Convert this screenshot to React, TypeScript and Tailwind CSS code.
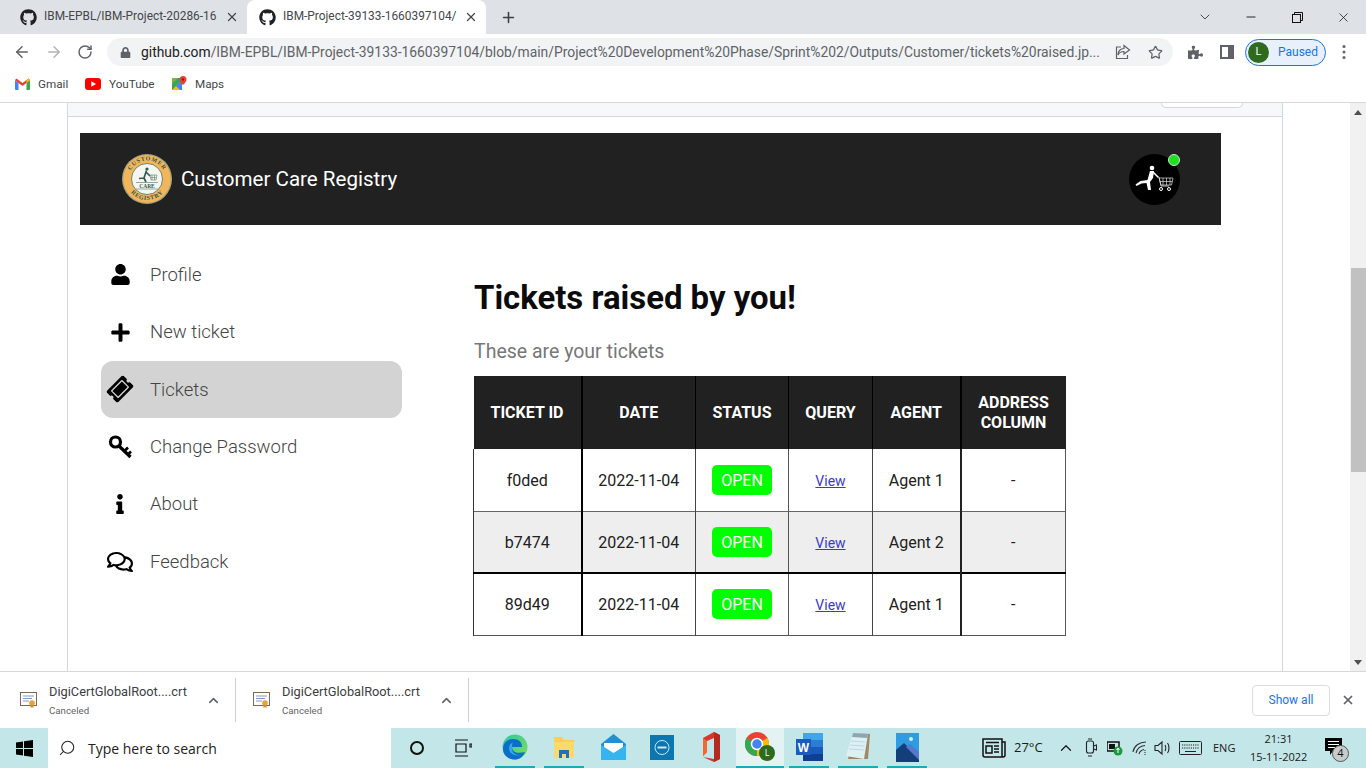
import React from "react";
import { ArrowLeft, ArrowRight, RotateCw, Star, X, Plus, ChevronDown, ChevronUp, Minus, Search } from "lucide-react";
import { FaGithub, FaUser, FaPlus, FaTicketAlt, FaInfo, FaRegComments, FaPuzzlePiece, FaLock } from "react-icons/fa";

function Tab({ title, active }: { title: string; active?: boolean }) {
  return (
    <div className={`relative flex h-[34px] w-[239px] items-center rounded-t-lg pl-[12px] ${active ? "bg-white" : ""}`}>
      <FaGithub className="h-[17px] w-[17px] shrink-0 text-[#202124]" />
      <div className="ml-[7px] w-[174px] whitespace-nowrap text-[11.900px] text-[#45474a]">{title}</div>
      <X className="ml-[7px] h-[14px] w-[14px] shrink-0 text-[#45474a]" strokeWidth={2.2} />
    </div>
  );
}

function Gmail() {
  return (
    <svg width="15" height="12" viewBox="0 0 15 12">
      <path d="M0 2v9a1 1 0 0 0 1 1h2.500V5z" fill="#4285f4" />
      <path d="M15 2v9a1 1 0 0 1-1 1h-2.500V5z" fill="#34a853" />
      <path d="M0 2 1.500.4 7.500 5 13.500.4 15 2l-3.500 3-4 3-4-3z" fill="#ea4335" />
      <path d="M11.500 1.900 13.500.4 15 2l-3.500 3z" fill="#fbbc04" />
    </svg>
  );
}
function YouTube() {
  return (
    <svg width="16" height="12" viewBox="0 0 16 12">
      <rect width="16" height="12" rx="3" fill="#f00" />
      <path d="M6.300 3.300v5.400L11 6z" fill="#fff" />
    </svg>
  );
}
function Maps() {
  return (
    <svg width="15" height="16" viewBox="0 0 15 16">
      <path d="M0 2h10v12H0z" fill="#34a853" />
      <path d="M0 14 10 4v10z" fill="#fbbc04" />
      <path d="M4 10 10 4v10H8z" fill="#4285f4" />
      <path d="M0 2h6L0 8z" fill="#7cb342" />
      <path d="M11 0a3.500 3.500 0 0 1 3.500 3.500C14.500 6 11 9 11 9S7.500 6 7.500 3.500A3.500 3.500 0 0 1 11 0z" fill="#ea4335" />
      <circle cx="11" cy="3.500" r="1.200" fill="#a50e0e" />
    </svg>
  );
}
function Bookmark({ icon, label, w }: { icon: React.ReactNode; label: string; w: string }) {
  return (
    <div className={`flex items-center ${w}`}>
      <div className="flex w-[16px] justify-center">{icon}</div>
      <span className="ml-[8px] text-[11.700px] text-[#45474a]">{label}</span>
    </div>
  );
}

function Logo() {
  return (
    <svg width="50" height="50" viewBox="0 0 50 50" className="shrink-0">
      <defs>
        <path id="arcTop" d="M6.500 25a18.500 18.500 0 0 1 37 0" />
        <path id="arcBot" d="M4 25a21 21 0 0 0 42 0" />
      </defs>
      <circle cx="25" cy="25" r="25" fill="#a9a47c" />
      <circle cx="25" cy="25" r="23.700" fill="#f2b65a" />
      <circle cx="25" cy="25" r="15.500" fill="#f6f6f0" stroke="#2f5d55" strokeWidth="0.7" />
      <text fontSize="6" fontWeight="700" fill="#35524a" fontFamily="'Liberation Serif', serif" letterSpacing="0.7">
        <textPath href="#arcTop" startOffset="50%" textAnchor="middle">CUSTOMER</textPath>
      </text>
      <text fontSize="6" fontWeight="700" fill="#35524a" fontFamily="'Liberation Serif', serif" letterSpacing="0.7">
        <textPath href="#arcBot" startOffset="50%" textAnchor="middle">REGISTRY</textPath>
      </text>
      <circle cx="25" cy="15" r="1.600" fill="#2f5d55" />
      <path d="M24.500 16.500 22 24l-5 .5M22 24l2 4M24 18l4 4" stroke="#2f5d55" strokeWidth="1.700" fill="none" />
      <path d="M28 21h7l-1 5h-5z M30 21v5M32.500 21v5M28.500 23.500h6" stroke="#4f7f76" strokeWidth="0.6" fill="none" />
      <rect x="15" y="29" width="20" height="6" fill="#f6f6f0" />
      <path d="M14 28.500h22M14 35h22" stroke="#2f5d55" strokeWidth="0.5" />
      <text x="25" y="34" fontSize="5.500" fontWeight="700" fill="#2f5d55" textAnchor="middle" fontFamily="'Liberation Serif', serif">CARE</text>
    </svg>
  );
}

function CartRunner() {
  return (
    <svg width="51" height="51" viewBox="0 0 51 51">
      <circle cx="25.500" cy="25.500" r="25.500" fill="#000" />
      <circle cx="23" cy="14" r="2.300" fill="#fff" />
      <path d="M21 17h4l-1 7-3 4 1 8h-3l-1.500-7-5 .5-5 2.500-1-1.500 5-3.500 7-1z" fill="#fff" />
      <path d="M24 18l5 5" stroke="#fff" strokeWidth="1.500" fill="none" />
      <path d="M28 23h2l2 9h8" stroke="#fff" strokeWidth="0.8" fill="none" />
      <path d="M30 24h14l-1.500 7H32zM34 24v7M37.500 24v7M41 24v7M31 27.500h12.500" stroke="#ddd" strokeWidth="0.7" fill="none" />
      <circle cx="32" cy="35" r="1.500" fill="none" stroke="#fff" />
      <circle cx="40" cy="35" r="1.500" fill="none" stroke="#fff" />
    </svg>
  );
}

function KeyIcon() {
  return (
    <svg width="25" height="25" viewBox="0 0 25 25" fill="none" stroke="#000">
      <circle cx="7.500" cy="8" r="5" strokeWidth="3.200" />
      <path d="M11 12 22.500 23" strokeWidth="3.200" />
      <path d="M16.500 17 20 13.500M20 20.500l3-3" strokeWidth="2.600" />
    </svg>
  );
}

const menu: { label: string; icon: React.ReactNode; active?: boolean }[] = [
  { label: "Profile", icon: <FaUser className="h-[21px] w-[21px]" /> },
  { label: "New ticket", icon: <FaPlus className="h-[21px] w-[21px]" /> },
  { label: "Tickets", icon: <FaTicketAlt className="h-[24px] w-[24px] -rotate-45" />, active: true },
  { label: "Change Password", icon: <KeyIcon /> },
  { label: "About", icon: <FaInfo className="h-[20px] w-[20px]" /> },
  { label: "Feedback", icon: <FaRegComments className="h-[26px] w-[26px]" /> },
];

const rows = [
  { id: "f0ded", agent: "Agent 1", bg: "bg-white", line: "border-b border-b-[#666]" },
  { id: "b7474", agent: "Agent 2", bg: "bg-[#eeeeee]", line: "border-b-2 border-b-black" },
  { id: "89d49", agent: "Agent 1", bg: "bg-white", line: "border-b border-b-[#555]" },
];

function TicketTable() {
  return (
    <table className="ml-[-1px] mt-[12px] w-[592px] table-fixed border-collapse font-['Roboto',sans-serif] text-[16px] text-[#212121]">
      <colgroup>
        <col className="w-[108px]" />
        <col className="w-[114px]" />
        <col className="w-[93px]" />
        <col className="w-[84px]" />
        <col className="w-[88px]" />
        <col className="w-[105px]" />
      </colgroup>
      <thead>
        <tr className="h-[73px] bg-[#212121] text-center font-bold leading-[20px] text-white">
          <th className="border-r-2 border-r-black">TICKET ID</th>
          <th className="border-r border-r-black">DATE</th>
          <th className="border-r border-r-black">STATUS</th>
          <th className="border-r border-r-black">QUERY</th>
          <th className="border-r-2 border-r-black">AGENT</th>
          <th>ADDRESS<br />COLUMN</th>
        </tr>
      </thead>
      <tbody>
        {rows.map((r) => (
          <tr key={r.id} className={`h-[62px] text-center ${r.bg} ${r.line}`}>
            <td className="border-l border-r-2 border-l-[#333] border-r-black pt-[2px]">{r.id}</td>
            <td className="border-r border-r-[#444] pt-[2px]">2022-11-04</td>
            <td className="border-r border-r-[#555]">
              <span className="inline-block h-[30px] w-[60px] rounded-[5px] bg-[#00ff00] text-center leading-[31px] text-white">OPEN</span>
            </td>
            <td className="border-r border-r-[#444] pt-[2px]">
              <a className="text-[14px] text-[#3a3ad0] underline">View</a>
            </td>
            <td className="border-r-2 border-r-[#222] pt-[2px]">{r.agent}</td>
            <td className="border-r border-r-[#555] pt-[2px]">-</td>
          </tr>
        ))}
      </tbody>
    </table>
  );
}

function CertIcon() {
  return (
    <svg width="17" height="16" viewBox="0 0 17 16" className="shrink-0">
      <rect x="0.500" y="0.500" width="16" height="13" fill="#fff" stroke="#7b6a55" />
      <path d="M3 4h11M3 6.500h9M3 9h6" stroke="#7f9cc7" strokeWidth="1" />
      <circle cx="12" cy="11" r="2.800" fill="#e6a23c" />
      <path d="M10.500 13v3l1.500-1 1.500 1v-3" fill="#d08a2a" />
    </svg>
  );
}

function Download() {
  return (
    <div className="flex h-[44px] w-[233px] items-center border-r border-r-[#cfd1d3] pl-[17px]">
      <CertIcon />
      <div className="ml-[12px] w-[145px]">
        <div className="whitespace-nowrap text-[12.800px] leading-[16px] text-[#3c4043]">DigiCertGlobalRoot....crt</div>
        <div className="mt-[5px] text-[9.700px] leading-[12px] text-[#5f6368]">Canceled</div>
      </div>
      <ChevronUp className="ml-[12px] h-[15px] w-[15px] text-[#5f6368]" strokeWidth={2.4} />
    </div>
  );
}

function TaskSlot({ w = "w-[40px]", line, active, children }: { w?: string; line?: boolean; active?: boolean; children: React.ReactNode }) {
  return (
    <div className={`flex h-[40px] shrink-0 flex-col items-center ${w} ${active ? "bg-[#e3f3f4]" : ""}`}>
      <div className="flex flex-1 items-center justify-center">{children}</div>
      <div className={`h-[2px] w-full ${line ? "bg-[#10b0ba]" : ""}`} />
    </div>
  );
}

function Edge() {
  return (
    <svg width="26" height="26" viewBox="0 0 26 26">
      <defs>
        <linearGradient id="edgeA" x1="0" y1="0" x2="1" y2="1">
          <stop offset="0" stopColor="#2fc6a0" />
          <stop offset="1" stopColor="#7ee05a" />
        </linearGradient>
      </defs>
      <circle cx="13" cy="13" r="12.500" fill="url(#edgeA)" />
      <path d="M1 15C1 8 6 5 11 5c6 0 9 3 9 8H10c0 5 5 7 13 5-2 5-6 7.500-10 7.500C6 25.500 1 21 1 15z" fill="#0c6fc7" />
      <path d="M10 13c-1 6 5 10 11 7-6 3-14 1-14-6 0-3 2-5 4-5.500-1 1-1 3-1 4.500z" fill="#36a7e8" />
    </svg>
  );
}
function Explorer() {
  return (
    <svg width="22" height="24" viewBox="0 0 22 24">
      <path d="M1 2h8l2 3h10v18H1z" fill="#f7cf5a" />
      <path d="M1 7h20v16H1z" fill="#fcd96b" />
      <path d="M6 23v-8h10v8h-3v-4H9v4z" fill="#1f6fc2" />
    </svg>
  );
}
function Mail() {
  return (
    <svg width="25" height="26" viewBox="0 0 25 26">
      <path d="M0 10 12.500 0 25 10v16H0z" fill="#1f8fd8" />
      <path d="M3 9h19v7l-9.500 6L3 16z" fill="#fff" />
      <path d="M0 11 12.500 19 25 11v15H0z" fill="#35b4f0" />
    </svg>
  );
}
function Dell() {
  return (
    <svg width="24" height="25" viewBox="0 0 24 25">
      <rect width="24" height="25" fill="#0b76b0" />
      <circle cx="12" cy="12.500" r="7" fill="none" stroke="#cfe8f4" strokeWidth="1" />
      <path d="M7.500 12.500h9" stroke="#cfe8f4" strokeWidth="2" />
    </svg>
  );
}
function Office() {
  return (
    <svg width="20" height="32" viewBox="0 0 20 32" className="ml-[4px]">
      <path d="M2 7 13 1l6 3v24l-6 3-11-5 11 2V7l-7 3v11l-4 4z" fill="#d8362a" />
      <path d="M13 1l6 3v24l-6 3z" fill="#b5291f" />
      <path d="M2 7 6 10v11l-4 4z" fill="#ef6a33" />
    </svg>
  );
}
function Chrome() {
  return (
    <div className="relative h-[32px] w-[30px]">
      <svg width="24" height="24" viewBox="0 0 24 24" className="mt-[1px]">
        <circle cx="12" cy="12" r="12" fill="#ea4335" />
        <path d="M12 12 1.600 6A12 12 0 0 0 12 24z" fill="#34a853" />
        <path d="M12 12V24A12 12 0 0 0 22.400 6z" fill="#fbbc04" />
        <circle cx="12" cy="12" r="5.500" fill="#4285f4" stroke="#fff" strokeWidth="1.500" />
      </svg>
      <div className="absolute right-0 bottom-[2px] flex h-[16px] w-[16px] items-center justify-center rounded-full bg-[#2e6b1f] text-[9px] text-white">L</div>
    </div>
  );
}
function Word() {
  return (
    <svg width="27" height="28" viewBox="0 0 27 28">
      <rect x="7" y="0" width="20" height="7" fill="#41a5ee" />
      <rect x="7" y="7" width="20" height="7" fill="#2b7cd3" />
      <rect x="7" y="14" width="20" height="7" fill="#185abd" />
      <rect x="7" y="21" width="20" height="7" fill="#103f91" />
      <rect x="0" y="6" width="15" height="16" fill="#1a5bc0" />
      <text x="7.500" y="18.500" fontSize="12" fontWeight="700" fill="#fff" textAnchor="middle" fontFamily="'Liberation Sans', sans-serif">W</text>
    </svg>
  );
}
function Notepad() {
  return (
    <svg width="26" height="30" viewBox="0 0 26 30">
      <path d="M9 1 25 2 23 27 3 27z" fill="#a08a63" />
      <path d="M8 1 23 2 19 27 1 24z" fill="#dff0f4" />
      <path d="M8 1 23 2 22.400 6 7 5z" fill="#8aa7b3" />
      <path d="M6 9 20 10M5 13 19.500 14M4 17 19 18" stroke="#b9d9e4" strokeWidth="1" />
    </svg>
  );
}
function Photos() {
  return (
    <svg width="23" height="29" viewBox="0 0 23 29">
      <rect width="23" height="29" fill="#2f9be0" />
      <path d="M0 29V17l8-7 15 15v4z" fill="#123f7a" />
      <path d="M10 14l4-3 9 8v8z" fill="#5577cf" />
      <circle cx="15" cy="6" r="2" fill="#cfeefb" />
    </svg>
  );
}

function Tray() {
  return (
    <div className="flex h-[40px] w-[384px] shrink-0 items-center text-[#1a1a1a]">
      <svg width="24" height="20" viewBox="0 0 24 20" className="shrink-0" fill="none" stroke="#111" strokeWidth="1.500">
        <path d="M1 1h19v18H3a2 2 0 0 1-2-2zM20 4h3v13a2 2 0 0 1-2 2h-1" />
        <rect x="4" y="8" width="6" height="7" />
        <path d="M12 8h5M12 11h5M12 14h5M4 4.500h13" />
      </svg>
      <span className="ml-[8px] w-[29px] whitespace-nowrap text-[13px]">27°C</span>
      <ChevronUp className="ml-[14px] h-[18px] w-[18px] shrink-0" strokeWidth={1.6} />
      <svg width="12" height="20" viewBox="0 0 12 20" className="ml-[10px] shrink-0" fill="none" stroke="#222" strokeWidth="1.100">
        <rect x="1.500" y="3" width="7" height="12" rx="2" />
        <path d="M3 1h4M3 18h4M8.500 8l3-1v5l-3-1" />
      </svg>
      <svg width="16" height="16" viewBox="0 0 16 16" className="ml-[10px] shrink-0">
        <rect x="0" y="2" width="12" height="9" fill="none" stroke="#111" strokeWidth="1.500" />
        <rect x="2" y="4" width="6" height="5" fill="#111" />
        <circle cx="11" cy="11" r="4.500" fill="#1a9a3a" />
        <path d="M11 8v5M9.500 10l1.500-2 1.500 2" stroke="#fff" strokeWidth="1" fill="none" />
      </svg>
      <svg width="16" height="16" viewBox="0 0 16 16" className="ml-[9px] shrink-0" fill="none" stroke="#333" strokeWidth="1.100">
        <path d="M1 12C2 6 7 2 14 2M4 13c1-4 4-7 9-7.500M7 14c.5-2 2.500-4 5-4.500" />
        <path d="M13 10v5" strokeDasharray="1 1" />
      </svg>
      <svg width="18" height="18" viewBox="0 0 18 18" className="ml-[6px] shrink-0" fill="none" stroke="#222" strokeWidth="1.100">
        <path d="M1 6.500h3L8 3v12l-4-3.500H1zM11 6c1 1.500 1 4.500 0 6M13.500 4c2 2.500 2 7.500 0 10" />
      </svg>
      <svg width="23" height="14" viewBox="0 0 23 14" className="ml-[7px] shrink-0" fill="none" stroke="#222" strokeWidth="1">
        <rect x="0.500" y="0.500" width="22" height="13" rx="1" />
        <path d="M3 4h17M3 7h17" strokeDasharray="1.200 1" />
        <path d="M6 10.500h11" />
      </svg>
      <span className="ml-[11px] w-[22px] whitespace-nowrap text-[11px]">ENG</span>
      <div className="ml-[15px] w-[57px] whitespace-nowrap text-center text-[11px] leading-[18px]">
        <div>21:31</div>
        <div>15-11-2022</div>
      </div>
      <div className="relative ml-[18px] h-[26px] w-[24px]">
        <svg width="17" height="17" viewBox="0 0 17 17" className="absolute top-[3px] left-0">
          <path d="M0 0h17v13H8l-3 4v-4H0z" fill="#000" />
          <path d="M3 3.500h11M3 6.500h11M3 9.500h8" stroke="#fff" strokeWidth="1" />
        </svg>
        <div className="absolute right-0 bottom-[-1px] flex h-[17px] w-[17px] items-center justify-center rounded-full border border-[#555] bg-[#c8cccc] text-[11px] text-[#111]">4</div>
      </div>
    </div>
  );
}

export default function App() {
  return (
    <div className="flex h-[768px] w-[1366px] flex-col overflow-hidden bg-white font-['Roboto',sans-serif]">
      {/* tab strip */}
      <div className="flex h-[34px] shrink-0 items-center bg-[#dee1e6] pl-[8px]">
        <Tab title="IBM-EPBL/IBM-Project-20286-16" />
        <Tab title="IBM-Project-39133-1660397104/" active />
        <Plus className="ml-[14px] h-[17px] w-[17px] text-[#3c4043]" strokeWidth={2.2} />
        <div className="flex-1" />
        <ChevronDown className="h-[16px] w-[16px] text-[#333]" strokeWidth={1.3} />
        <Minus className="ml-[31px] h-[14px] w-[14px] text-[#111]" strokeWidth={1.5} />
        <svg width="11" height="11" viewBox="0 0 11 11" className="ml-[34px]" fill="none" stroke="#111" strokeWidth="1">
          <rect x="0.500" y="2.500" width="8" height="8" />
          <path d="M2.500 2.500v-2h8v8h-2" />
        </svg>
        <X className="ml-[33px] mr-[15px] h-[15px] w-[15px] text-[#111]" strokeWidth={1.2} />
      </div>
      {/* toolbar */}
      <div className="flex h-[34px] shrink-0 items-center bg-white pl-[13px] pt-[2px]">
        <ArrowLeft className="h-[18px] w-[18px] text-[#5f6368]" strokeWidth={2} />
        <ArrowRight className="ml-[14px] h-[18px] w-[18px] text-[#b3b5b8]" strokeWidth={2} />
        <RotateCw className="ml-[14px] h-[16px] w-[16px] text-[#5f6368]" strokeWidth={2.2} />
        <div className="ml-[14px] flex h-[28px] w-[1066px] shrink-0 items-center rounded-full bg-[#f1f3f4] pl-[13px]">
          <FaLock className="h-[11px] w-[11px] shrink-0 text-[#5f6368]" />
          <div className="ml-[10px] w-[958px] shrink-0 whitespace-nowrap text-[13.850px] text-[#5f6368]">
            <span className="text-[#202124]">github.com</span>/IBM-EPBL/IBM-Project-39133-1660397104/blob/main/Project%20Development%20Phase/Sprint%202/Outputs/Customer/tickets%20raised.jp...
          </div>
          <svg width="16" height="16" viewBox="0 0 16 16" className="ml-[16px] shrink-0" fill="none" stroke="#5f6368" strokeWidth="1.200">
            <path d="M9 1.500 14.500 6 9 10V7.500C5.500 7.500 4 9 3 11c0-4 2.500-6.500 6-6.500zM6 3H1.500v11.500h11V11" />
          </svg>
          <Star className="ml-[17px] h-[15px] w-[15px] shrink-0 text-[#5f6368]" strokeWidth={2} />
        </div>
        <FaPuzzlePiece className="ml-[15px] h-[15px] w-[15px] text-[#5f6368]" />
        <svg width="14" height="14" viewBox="0 0 14 14" className="ml-[17px]">
          <path d="M0 0h14v14H0z" fill="#5f6368" />
          <path d="M2 2h6v10H2z" fill="#fff" />
        </svg>
        <div className="ml-[11px] flex h-[27px] w-[81px] items-center rounded-full border border-[#1a73e8] bg-[#e8f0fb] pl-[2px]">
          <div className="flex h-[21px] w-[21px] items-center justify-center rounded-full bg-[#2e6b1f] text-[11px] text-white">L</div>
          <span className="ml-[9px] text-[12px] text-[#1a73e8]">Paused</span>
        </div>
        <svg width="4" height="16" viewBox="0 0 4 16" className="ml-[16px]" fill="#5f6368">
          <circle cx="2" cy="2.500" r="1.500" />
          <circle cx="2" cy="8" r="1.500" />
          <circle cx="2" cy="13.500" r="1.500" />
        </svg>
      </div>
      {/* bookmarks */}
      <div className="flex h-[35px] shrink-0 items-center border-b border-b-[#d6d8da] bg-white pb-[1px] pl-[14px]">
        <Bookmark icon={<Gmail />} label="Gmail" w="w-[71px]" />
        <Bookmark icon={<YouTube />} label="YouTube" w="w-[86px]" />
        <Bookmark icon={<Maps />} label="Maps" w="" />
      </div>
      {/* page */}
      <div className="flex min-h-0 flex-1 bg-white">
        <div className="w-[67px] shrink-0 bg-white" />
        <div className="w-[1216px] shrink-0 overflow-hidden border-x border-x-[#d0d7de]">
          <div className="h-[14px] border-b border-b-[#d0d7de] bg-[#f6f8fa] pl-[1093px]">
            <div className="h-[5px] w-[82px] rounded-b-md border-x border-b border-[#d0d7de] bg-white" />
          </div>
          <div className="ml-[12px] mt-[16px] w-[1141px]">
            <div className="flex h-[92px] items-center bg-[#212121] pl-[42px] pr-[41px]">
              <Logo />
              <span className="ml-[9px] text-[20.550px] text-white">Customer Care Registry</span>
              <div className="flex-1" />
              <div className="relative h-[51px] w-[51px]">
                <CartRunner />
                <div className="absolute top-0 right-0 h-[12px] w-[12px] rounded-full border border-[#c8e8c8] bg-[#1fe01f]" />
              </div>
            </div>
            <div className="flex">
              <div className="ml-[21px] mt-[21px] w-[301px] shrink-0">
                {menu.map((m) => (
                  <div key={m.label} className={`flex h-[57.400px] items-center rounded-xl text-[18.500px] font-light text-[#444] ${m.active ? "bg-[#d3d3d3]" : ""}`}>
                    <div className="flex w-[38px] justify-center text-black">{m.icon}</div>
                    <span className="ml-[11px] mt-[2px]">{m.label}</span>
                  </div>
                ))}
              </div>
              <div className="ml-[72px] mt-[53px]">
                <h1 className="text-[32.900px] font-bold leading-[40px] text-[#0b0b0b]">Tickets raised by you!</h1>
                <p className="mt-[22px] text-[19.500px] leading-[24px] text-[#777]">These are your tickets</p>
                <TicketTable />
              </div>
            </div>
          </div>
        </div>
        <div className="w-[67px] shrink-0 bg-white" />
        <div className="flex w-[16px] shrink-0 flex-col items-center bg-[#f1f1f1]">
          <div className="mt-[7px] h-0 w-0 border-x-[4px] border-b-[5px] border-x-transparent border-b-[#505050]" />
          <div className="mt-[153px] h-[204px] w-[15px] bg-[#c1c1c1]" />
          <div className="flex-1" />
          <div className="mb-[6px] h-0 w-0 border-x-[4px] border-t-[5px] border-x-transparent border-t-[#505050]" />
        </div>
      </div>
      {/* download bar */}
      <div className="flex h-[57px] shrink-0 items-center border-t border-t-[#d6d8da] bg-white pl-[3px]">
        <Download />
        <Download />
        <div className="flex-1" />
        <div className="flex h-[31px] w-[78px] items-center justify-center rounded-[4px] border border-[#dadce0] text-[12px] text-[#1a73e8]">Show all</div>
        <X className="ml-[11px] mr-[11px] h-[14px] w-[14px] text-[#5f6368]" strokeWidth={3} />
      </div>
      {/* taskbar */}
      <div className="flex h-[40px] shrink-0 items-center bg-[#c3e6e8] font-['Open_Sans',sans-serif]">
        <div className="flex w-[48px] justify-center">
          <svg width="17" height="17" viewBox="0 0 17 17" fill="#000">
            <path d="M0 2.500 7 1.500V8H0zM8 1.300 17 0v8H8zM0 9h7v6.500L0 14.500zM8 9h9v8l-9-1.300z" />
          </svg>
        </div>
        <div className="flex h-[40px] w-[343px] items-center bg-white pl-[10px]">
          <Search className="h-[18px] w-[18px] -scale-x-100 text-[#222]" strokeWidth={1.4} />
          <span className="ml-[12px] text-[14px] text-[#222]">Type here to search</span>
        </div>
        <div className="ml-[2px] flex">
          <div className="flex w-[47px] items-center justify-center">
            <div className="h-[14px] w-[14px] rounded-full border-2 border-[#111]" />
          </div>
          <div className="flex w-[47px] items-center justify-center">
            <svg width="17" height="18" viewBox="0 0 17 18" fill="none" stroke="#111" strokeWidth="1.200">
              <path d="M0 1h13M0 17h13M1 5h10v8H1zM15 5h2v3h-2z" />
            </svg>
          </div>
          <div className="w-[8px]" />
          <TaskSlot line><Edge /></TaskSlot>
          <div className="w-[9px]" />
          <TaskSlot line><Explorer /></TaskSlot>
          <TaskSlot w="w-[58px]"><Mail /></TaskSlot>
          <TaskSlot><Dell /></TaskSlot>
          <TaskSlot w="w-[54px]"><Office /></TaskSlot>
          <TaskSlot w="w-[48px]" line active><Chrome /></TaskSlot>
          <div className="w-[5px]" />
          <TaskSlot line><Word /></TaskSlot>
          <div className="w-[9px]" />
          <TaskSlot line><Notepad /></TaskSlot>
          <div className="w-[9px]" />
          <TaskSlot line><Photos /></TaskSlot>
        </div>
        <div className="flex-1" />
        <Tray />
      </div>
    </div>
  );
}
